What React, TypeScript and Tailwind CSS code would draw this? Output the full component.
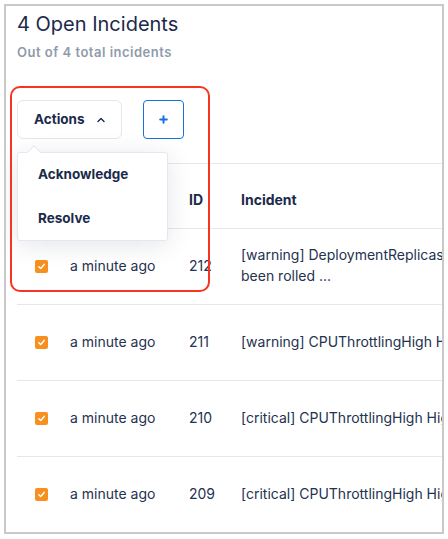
import React from "react";

const font = { fontFamily: "Inter, 'Noto Sans', sans-serif" };

function Check() {
  return (
    <div className="w-[13px] h-[13px] rounded-[2px] bg-[#f7901e] flex items-center justify-center">
      <svg width="9" height="9" viewBox="0 0 9 9" fill="none">
        <path d="M1.8 4.7 L3.7 6.5 L7.2 2.4" stroke="white" strokeWidth="1.5" strokeLinecap="round" strokeLinejoin="round" />
      </svg>
    </div>
  );
}

type Row = { id: string; lines: string[] };

const rows: Row[] = [
  { id: "212", lines: ["[warning] DeploymentReplicasMismatch Deployment has not", "been rolled ..."] },
  { id: "211", lines: ["[warning] CPUThrottlingHigh High CPU throttling"] },
  { id: "210", lines: ["[critical] CPUThrottlingHigh High CPU throttling"] },
  { id: "209", lines: ["[critical] CPUThrottlingHigh High CPU throttling"] },
];

export default function App() {
  return (
    <div className="w-[448px] h-[539px] bg-white p-[4px]" style={font}>
      <div className="relative w-[440px] h-[530px] border-2 border-[#c9c9c9] overflow-hidden bg-white">
        <div className="pl-[11px]">
          <div className="mt-[4px] text-[20px] leading-[28px] text-[#1b2a4a] whitespace-nowrap">4 Open Incidents</div>
          <div className="mt-[5px] text-[13px] leading-[18px] font-semibold tracking-[0.5px] text-[#8f9bab] whitespace-nowrap">Out of 4 total incidents</div>
          <div className="mt-[39px] flex items-center gap-[21px]">
            <div className="w-[105px] h-[39px] rounded-[6px] border border-[#e3e8ef] flex items-center pl-[16px] gap-[12px]">
              <span className="text-[13.5px] font-bold text-[#1b2a4a]">Actions</span>
              <svg width="8" height="6" viewBox="0 0 8 6" fill="none">
                <path d="M1 4.5 L4 1.5 L7 4.5" stroke="#1b2a4a" strokeWidth="1.4" strokeLinecap="round" strokeLinejoin="round" />
              </svg>
            </div>
            <div className="w-[41px] h-[39px] rounded-[4px] border border-[#1a6fe0] flex items-center justify-center">
              <svg width="9" height="9" viewBox="0 0 9 9" fill="none">
                <path d="M4.5 1.2 V7.8 M1.2 4.5 H7.8" stroke="#1a6fe0" strokeWidth="2" strokeLinecap="round" />
              </svg>
            </div>
          </div>
          <div className="mt-[24px] border-t border-[#e3e8ef]">
            <div className="h-[65px] pt-[6px] border-b border-[#e3e8ef] flex items-center text-[14px] font-bold text-[#1b2a4a]">
              <div className="w-[172px] shrink-0" />
              <div className="w-[52px] shrink-0">ID</div>
              <div className="whitespace-nowrap">Incident</div>
            </div>
            {rows.map((r) => (
              <div key={r.id} className="h-[76px] pb-[3px] border-b border-[#e3e8ef] flex items-center text-[14px] text-[#24324f]">
                <div className="w-[53px] shrink-0 pl-[18px] pt-[3px]">
                  <Check />
                </div>
                <div className="w-[119px] shrink-0 whitespace-nowrap">a minute ago</div>
                <div className="w-[52px] shrink-0">{r.id}</div>
                <div className="whitespace-nowrap leading-[21px]">
                  {r.lines.map((l, i) => (
                    <div key={i}>{l}</div>
                  ))}
                </div>
              </div>
            ))}
          </div>
        </div>

        <div className="absolute left-[11px] top-[146px] w-[151px] h-[89px] bg-white border border-[#e3e8ef] rounded-[3px] shadow-[0_4px_24px_rgba(30,45,80,0.12)]">
          <div className="absolute left-[11px] top-[-6px] w-[10px] h-[10px] bg-white rotate-45 border-l border-t border-[#e3e8ef]" />
          <div className="relative pl-[20px] pt-[11px] text-[13.5px] font-bold text-[#1b2a4a]">
            <div className="h-[20px] leading-[20px]">Acknowledge</div>
            <div className="h-[20px] leading-[20px] mt-[24px]">Resolve</div>
          </div>
        </div>

        <div className="absolute left-[4px] top-[80px] w-[200px] h-[206px] border-[2.5px] border-[#f6341f] rounded-[10px]" />
      </div>
    </div>
  );
}
